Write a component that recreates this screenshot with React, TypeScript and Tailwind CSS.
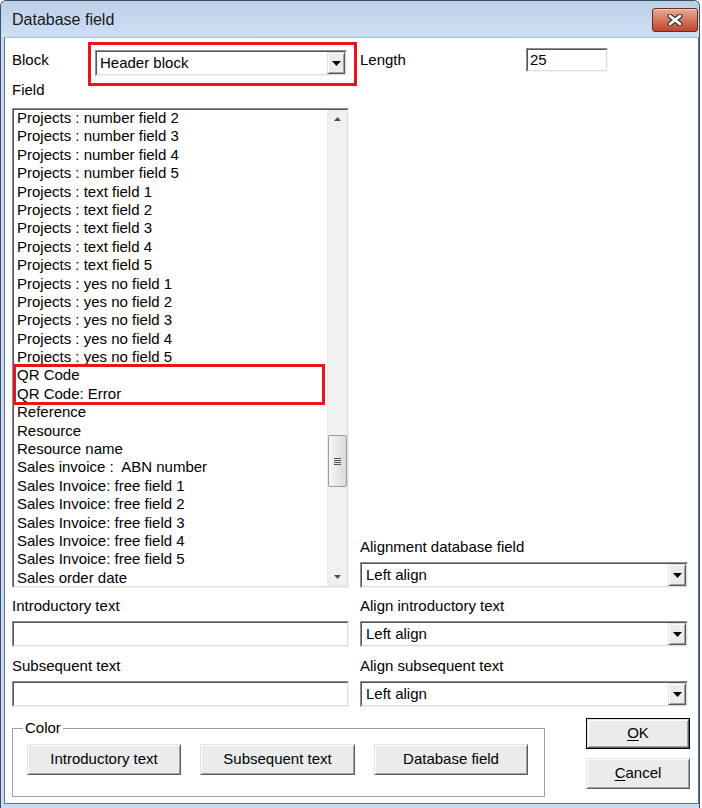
import React from "react";

const fieldItems = [
  "Projects : number field 2",
  "Projects : number field 3",
  "Projects : number field 4",
  "Projects : number field 5",
  "Projects : text field 1",
  "Projects : text field 2",
  "Projects : text field 3",
  "Projects : text field 4",
  "Projects : text field 5",
  "Projects : yes no field 1",
  "Projects : yes no field 2",
  "Projects : yes no field 3",
  "Projects : yes no field 4",
  "Projects : yes no field 5",
  "QR Code",
  "QR Code: Error",
  "Reference",
  "Resource",
  "Resource name",
  "Sales invoice :  ABN number",
  "Sales Invoice: free field 1",
  "Sales Invoice: free field 2",
  "Sales Invoice: free field 3",
  "Sales Invoice: free field 4",
  "Sales Invoice: free field 5",
  "Sales order date",
];

const TriDown = ({ color = "#000", w = 9, h = 5 }: { color?: string; w?: number; h?: number }) => (
  <svg width={w} height={h} viewBox={`0 0 ${w} ${h}`}>
    <path d={`M0 0h${w}L${w / 2} ${h}z`} fill={color} />
  </svg>
);

const TriUp = ({ color = "#000" }: { color?: string }) => (
  <svg width="7" height="4" viewBox="0 0 7 4">
    <path d="M0 4h7L3.5 0z" fill={color} />
  </svg>
);

// classic sunken edit border
const Sunken = ({ className = "", children }: any) => (
  <div
    className={`flex border border-t-[#8f8f8f] border-l-[#8f8f8f] border-r-[#f4f4f4] border-b-[#f4f4f4] ${className}`}
  >
    <div className="flex-1 flex min-w-0 border border-t-[#555555] border-l-[#555555] border-r-[#dcdcdc] border-b-[#dcdcdc] bg-white">
      {children}
    </div>
  </div>
);

const Combo = ({ value, className = "", pad = "pl-[4px]" }: any) => (
  <Sunken className={`h-[26px] ${className}`}>
    <div className={`flex-1 leading-[22px] ${pad}`}>{value}</div>
    <div className="w-[18px] h-full flex items-center justify-center bg-[#ececec] border border-t-[#e3e3e3] border-l-[#e3e3e3] border-r-[#5a5a5a] border-b-[#5a5a5a] shadow-[inset_1px_1px_0_#ffffff,inset_-1px_-1px_0_#a0a0a0]">
      <TriDown />
    </div>
  </Sunken>
);

const WinButton = ({ children, isDefault, className = "" }: any) => {
  const face = (
    <div className="flex-1 flex items-center justify-center bg-[#ebebeb] border border-t-[#e3e3e3] border-l-[#e3e3e3] border-r-[#5f5f5f] border-b-[#5f5f5f] shadow-[inset_1px_1px_0_#ffffff,inset_-1px_-1px_0_#a0a0a0]">
      {children}
    </div>
  );
  if (isDefault) {
    return <div className={`flex border border-black ${className}`}>{face}</div>;
  }
  return <div className={`flex ${className}`}>{face}</div>;
};

const ListBox = () => (
  <div className="relative w-[337px] h-[480px]">
    <Sunken className="h-full">
      <div className="flex-1 overflow-hidden pl-[3px]">
        <div className="-mt-[1px]">
          {fieldItems.map((item) => (
            <div key={item} className="leading-[18.4px] h-[18.4px] whitespace-pre">
              {item}
            </div>
          ))}
        </div>
      </div>
      {/* scrollbar */}
      <div className="w-[20px] h-full flex flex-col bg-[#f0f0f0] border-l border-[#e8e8e8]">
        <div className="h-[18px] flex items-center justify-center">
          <TriUp color="#505050" />
        </div>
        <div className="mt-[307px] h-[52px] rounded-[2px] border border-[#9c9c9c] bg-gradient-to-r from-[#f7f7f7] to-[#d9d9d9] flex flex-col items-center justify-center gap-[1px]">
          <div className="w-[7px] h-[1px] bg-[#555]" />
          <div className="w-[7px] h-[1px] bg-[#555]" />
          <div className="w-[7px] h-[1px] bg-[#555]" />
          <div className="w-[7px] h-[1px] bg-[#555]" />
        </div>
        <div className="mt-auto h-[18px] flex items-center justify-center">
          <TriDown color="#505050" w={7} h={4} />
        </div>
      </div>
    </Sunken>
    {/* annotation */}
    <div className="absolute left-[1px] top-[256px] w-[312px] h-[41px] border-[3px] border-[#e8141c]" />
  </div>
);

const CloseIcon = () => (
  <svg width="16" height="12" viewBox="0 0 16 12">
    <path d="M3 2L13 10M13 2L3 10" stroke="#3b3b3b" strokeWidth="5" strokeLinecap="round" />
    <path d="M3 2L13 10M13 2L3 10" stroke="#ffffff" strokeWidth="2.6" strokeLinecap="round" />
  </svg>
);

export default function App() {
  return (
    <div className="w-[702px] h-[808px] bg-white overflow-hidden font-['Liberation_Sans',Arial,sans-serif] text-[15px] text-black">
      <div className="w-[700px] h-[808px] flex flex-col border-l border-t border-r border-[#3d4f66] rounded-t-[6px] bg-[#c9dbf0]">
        {/* title bar */}
        <div className="h-[36px] flex items-start rounded-t-[5px] bg-gradient-to-b from-[#bccfe7] to-[#cfe0f4] pl-[11px] pr-[1px]">
          <div className="mt-[10px] text-[16px] leading-[18px] text-[#151a24]">Database field</div>
          <div className="ml-auto mt-[7px] w-[46px] h-[24px] flex items-center justify-center rounded-[3px] border border-[#6e2a20] bg-gradient-to-b from-[#e8ab9a] via-[#d6755e] to-[#bf4429] shadow-[inset_0_1px_0_#f3cabd]">
            <CloseIcon />
          </div>
        </div>

        {/* body */}
        <div className="flex-1 ml-[3px] mb-[4px] border border-[#5d708a] border-t-[#a9bfd8] bg-white pl-[7px] pt-[10px]">
          <div className="grid grid-cols-[337px_328px] gap-x-[11px]">
            {/* row 1 */}
            <div className="relative h-[28px] flex">
              <div className="w-[83px] pt-[3px] leading-[18px]">Block</div>
              <Combo value="Header block" className="mt-[2px] w-[252px]" pad="pl-[3px]" />
              <div className="absolute left-[76px] -top-[6px] w-[269px] h-[44px] border-[3px] border-[#e8141c]" />
            </div>
            <div className="h-[28px] flex">
              <div className="w-[166px] pt-[3px] leading-[18px]">Length</div>
              <Sunken className="w-[82px] h-[24px]">
                <div className="pl-[2px] leading-[20px]">25</div>
              </Sunken>
            </div>

            {/* row 2 */}
            <div className="flex flex-col">
              <div className="mt-[5px] h-[18px] leading-[18px]">Field</div>
              <div className="mt-[9px]">
                <ListBox />
              </div>
            </div>
            <div className="flex flex-col justify-end">
              <div className="h-[18px] leading-[18px]">Alignment database field</div>
              <Combo value="Left align" className="mt-[6px] w-[328px]" />
            </div>

            {/* row 3 */}
            <div className="mt-[9px] h-[18px] leading-[18px]">Introductory text</div>
            <div className="mt-[9px] h-[18px] leading-[18px]">Align introductory text</div>
            <Sunken className="mt-[6px] h-[26px] w-[337px]" />
            <Combo value="Left align" className="mt-[6px] w-[328px]" />

            {/* row 4 */}
            <div className="mt-[10px] h-[18px] leading-[18px]">Subsequent text</div>
            <div className="mt-[10px] h-[18px] leading-[18px]">Align subsequent text</div>
            <Sunken className="mt-[6px] h-[26px] w-[337px]" />
            <Combo value="Left align" className="mt-[6px] w-[328px]" />
          </div>

          {/* bottom */}
          <div className="mt-[11px] flex items-start">
            <fieldset className="mt-[1px] w-[533px] h-[78px] border border-[#a0a0a0] pl-[10px]">
              <legend className="px-[2px] leading-[18px]">Color</legend>
              <div className="mt-[7px] ml-[4px] flex gap-[19px]">
                <WinButton className="w-[154px] h-[31px]">Introductory text</WinButton>
                <WinButton className="w-[155px] h-[31px]">Subsequent text</WinButton>
                <WinButton className="w-[154px] h-[31px]">Database field</WinButton>
              </div>
            </fieldset>
            <div className="ml-[41px] flex flex-col gap-[9px]">
              <WinButton isDefault className="w-[104px] h-[31px]">
                <span>
                  <span className="underline underline-offset-[2px]">O</span>K
                </span>
              </WinButton>
              <WinButton className="w-[104px] h-[31px]">
                <span>
                  <span className="underline underline-offset-[2px]">C</span>ancel
                </span>
              </WinButton>
            </div>
          </div>
        </div>
      </div>
    </div>
  );
}
